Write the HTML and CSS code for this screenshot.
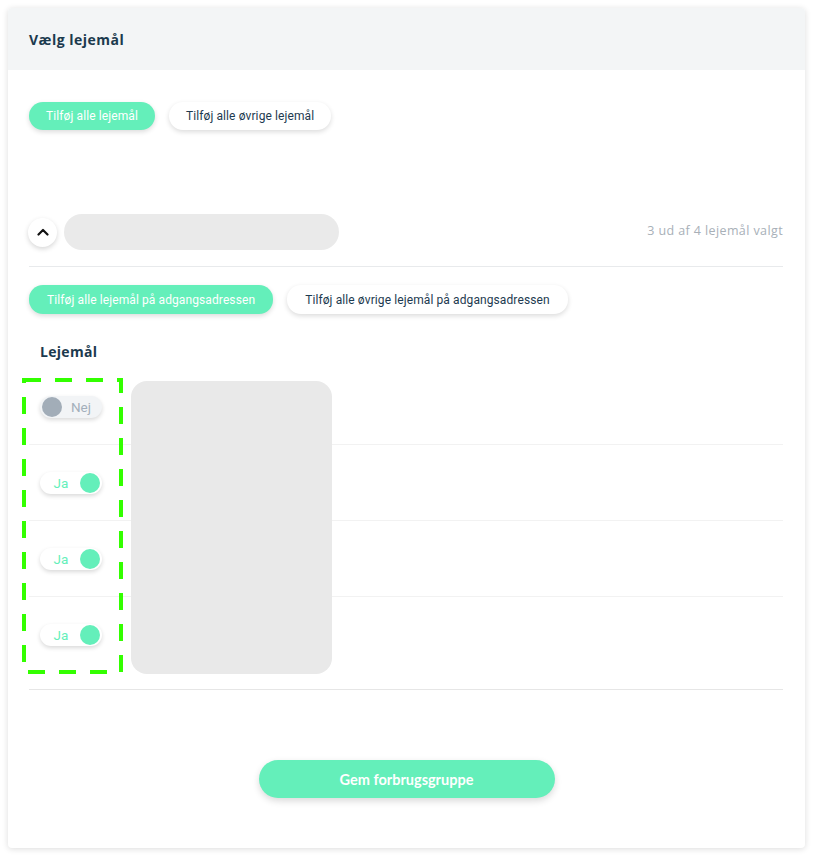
FILE: index.html
```html
<!DOCTYPE html>
<html lang="da">
<head>
  <meta charset="UTF-8" />
  <meta name="viewport" content="width=device-width, initial-scale=1.0"/>
  <title>Vælg lejemål</title>
  <link rel="stylesheet" href="styles.css">
</head>
<body>

  <div class="card">
    <div class="card-header">
      <h2>Vælg lejemål</h2>
    </div>

    <div class="card-body">
      <div class="btn-row">
        <button class="pill-btn green">Tilføj alle lejemål</button>
        <button class="pill-btn white">Tilføj alle øvrige lejemål</button>
      </div>

      <div class="address-row">
        <button class="collapse-btn" aria-label="Skjul">
          <svg width="12" height="8" viewBox="0 0 12 8">
            <path d="M1.5 6.5 L6 2 L10.5 6.5" fill="none" stroke="#111" stroke-width="2.2" stroke-linecap="round" stroke-linejoin="round"/>
          </svg>
        </button>
        <div class="address-placeholder"></div>
        <span class="count">3 ud af 4 lejemål valgt</span>
      </div>

      <div class="btn-row second">
        <button class="pill-btn green">Tilføj alle lejemål på adgangsadressen</button>
        <button class="pill-btn white">Tilføj alle øvrige lejemål på adgangsadressen</button>
      </div>

      <h3 class="section-title">Lejemål</h3>

      <div class="unit-list">
        <div class="unit-row">
          <span class="toggle off"><span class="knob"></span><span class="label">Nej</span></span>
        </div>
        <div class="unit-row">
          <span class="toggle on"><span class="label">Ja</span><span class="knob"></span></span>
        </div>
        <div class="unit-row">
          <span class="toggle on"><span class="label">Ja</span><span class="knob"></span></span>
        </div>
        <div class="unit-row last">
          <span class="toggle on"><span class="label">Ja</span><span class="knob"></span></span>
        </div>

        <!-- redacted unit names -->
        <div class="redacted"></div>
        <!-- highlight around the toggle column -->
        <svg class="highlight" width="101" height="296" viewBox="0 0 101 296">
          <rect x="2" y="2" width="97" height="292" fill="none" stroke="#33ff00" stroke-width="4" stroke-dasharray="17 14"/>
        </svg>
      </div>

      <div class="save-row">
        <button class="save-btn">Gem forbrugsgruppe</button>
      </div>
    </div>
  </div>

</body>
</html>
```

FILE: styles.css
```css
* {
  box-sizing: border-box;
}

body {
  margin: 0;
  padding: 8px;
  background: #fff;
  font-family: 'Roboto', sans-serif;
  color: #1d3a50;
}

.card {
  width: 797px;
  height: 840px;
  background: #fff;
  border-radius: 4px;
  box-shadow: 0 1px 6px rgba(0, 0, 0, 0.14);
  overflow: hidden;
}

.card-header {
  height: 62px;
  background: #f3f5f6;
  padding: 0 21px;
  display: flex;
  align-items: center;
}

.card-header h2 {
  margin: 0;
  font-family: 'Open Sans', sans-serif;
  font-size: 14px;
  font-weight: 700;
  letter-spacing: 0.5px;
  color: #1b3a4e;
}

.card-body {
  padding: 32px 22px 0 21px;
}

.btn-row {
  display: flex;
  gap: 14px;
}

.pill-btn {
  height: 28px;
  padding: 0 17px;
  border: none;
  border-radius: 14px;
  font-family: 'Roboto', sans-serif;
  font-size: 12px;
  letter-spacing: 0.1px;
  cursor: pointer;
  box-shadow: 0 2px 5px rgba(0, 0, 0, 0.14);
}

.pill-btn.green {
  background: #64efba;
  color: #fff;
}

.pill-btn.white {
  background: #fff;
  color: #1d3a50;
}

.btn-row.second .pill-btn {
  height: 29px;
  padding: 0 18px;
}

.address-row {
  display: flex;
  align-items: center;
  margin-top: 84px;
  padding-bottom: 16px;
  border-bottom: 1px solid #e8eaec;
}

.collapse-btn {
  width: 29px;
  height: 29px;
  border-radius: 50%;
  border: none;
  background: #fff;
  box-shadow: 0 2px 5px rgba(0, 0, 0, 0.16);
  display: flex;
  align-items: center;
  justify-content: center;
  padding: 0;
  margin-left: -1px;
}

.address-placeholder {
  width: 275px;
  height: 36px;
  border-radius: 18px;
  background: #eaeaea;
  margin-left: 7px;
}

.count {
  margin-left: auto;
  margin-bottom: 3px;
  font-family: 'Open Sans', sans-serif;
  font-size: 12.5px;
  letter-spacing: 0.4px;
  color: #a8b0b8;
}

.btn-row.second {
  margin-top: 18px;
}

.section-title {
  margin: 30px 0 0 11px;
  font-family: 'Open Sans', sans-serif;
  font-size: 14px;
  font-weight: 700;
  letter-spacing: 0.3px;
  color: #1b3a4e;
  line-height: 16px;
}

.unit-list {
  position: relative;
  margin-top: 9px;
  padding-bottom: 16px;
  border-bottom: 1px solid #e6e6e6;
}

.unit-row {
  height: 76px;
  display: flex;
  align-items: center;
  padding-left: 11px;
  border-bottom: 1px solid #f2f2f2;
}

.unit-row.last {
  border-bottom: none;
}

.toggle {
  width: 62px;
  height: 22px;
  border-radius: 11px;
  display: flex;
  align-items: center;
  padding: 0 2px;
  box-shadow: 0 2px 4px rgba(0, 0, 0, 0.15);
  font-size: 13.5px;
}

.toggle .knob {
  width: 20px;
  height: 20px;
  border-radius: 50%;
}

.toggle .label {
  flex: 1;
  text-align: center;
}

.toggle.off {
  background: #f2f4f6;
  color: #a3afbb;
}

.toggle.off .knob {
  background: #a2adb8;
}

.toggle.on {
  background: #fff;
  color: #64efba;
}

.toggle.on .knob {
  background: #64efba;
}

.redacted {
  position: absolute;
  left: 102px;
  top: 12px;
  width: 201px;
  height: 293px;
  border-radius: 16px;
  background: #e9e9e9;
}

.highlight {
  position: absolute;
  left: -7px;
  top: 9px;
}

.save-row {
  display: flex;
  justify-content: center;
  margin-top: 70px;
}

.save-btn {
  width: 296px;
  height: 38px;
  border: none;
  border-radius: 19px;
  background: #64efba;
  color: #fff;
  font-family: 'Lato', sans-serif;
  font-size: 14.5px;
  font-weight: 700;
  box-shadow: 0 3px 7px rgba(0, 0, 0, 0.15);
  cursor: pointer;
  margin-left: 1px;
}
```
